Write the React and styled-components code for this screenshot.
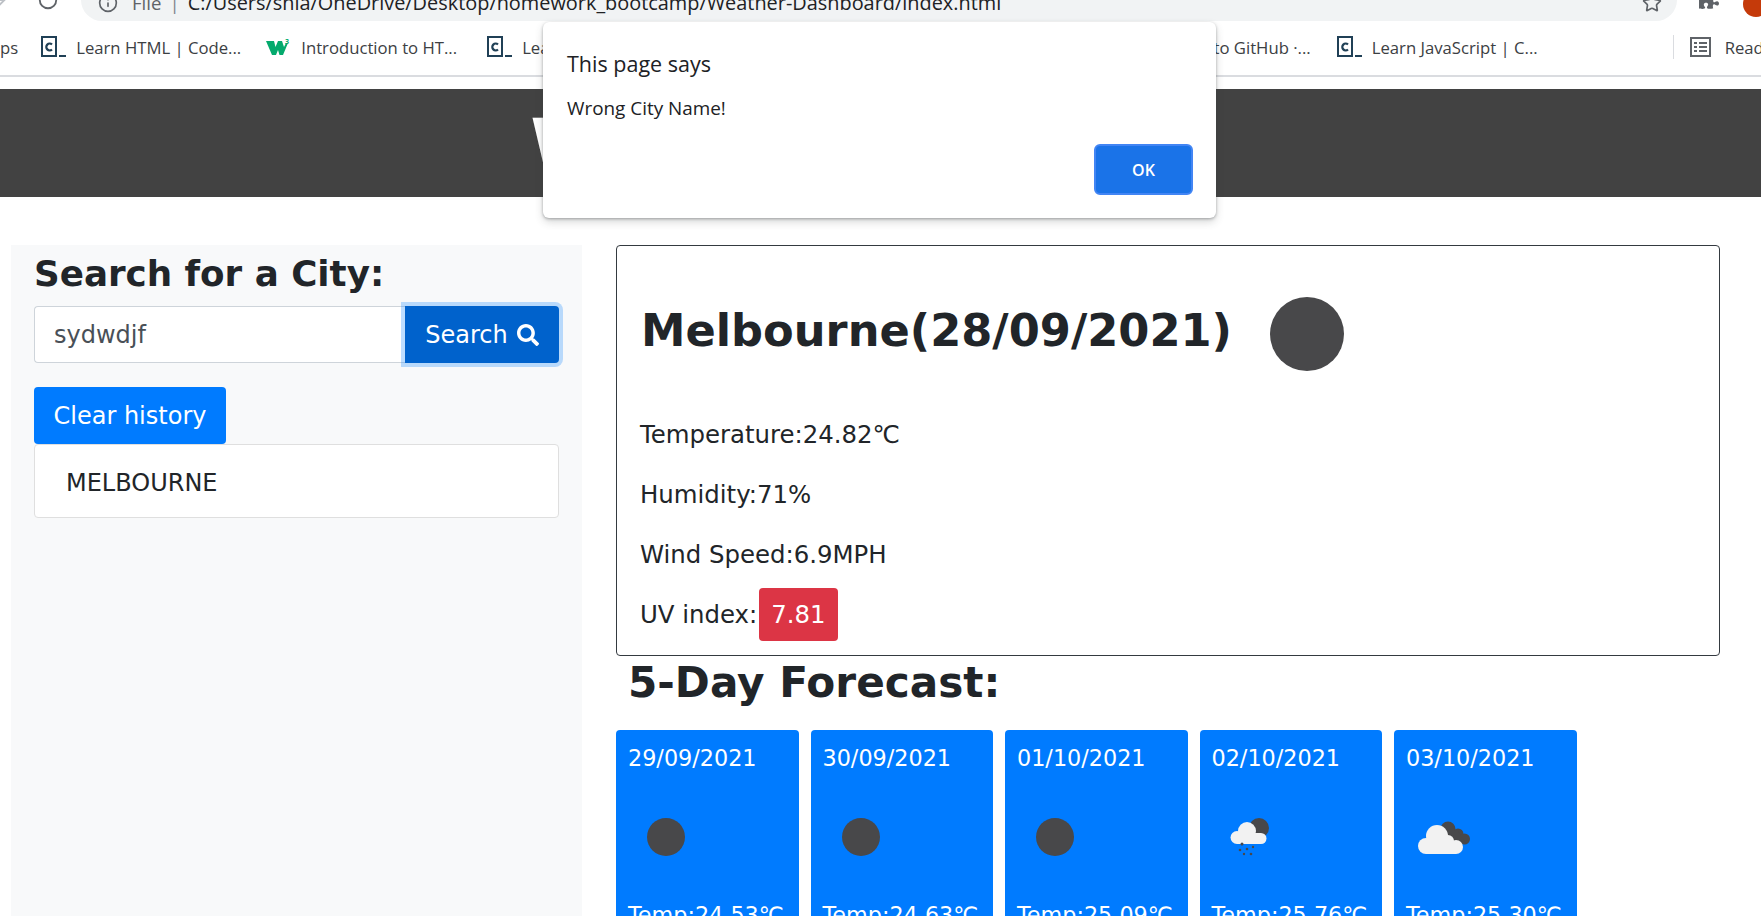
import React from 'react';
import styled, { createGlobalStyle } from 'styled-components';
import { FaSearch, FaPuzzlePiece } from 'react-icons/fa';
import { ArrowRight, RotateCw, Info, Star } from 'lucide-react';

const GlobalStyle = createGlobalStyle`
  html, body {
    margin: 0;
    height: 100%;
    overflow: hidden;
    background: #ffffff;
  }
  * {
    box-sizing: border-box;
  }
`;

const Page = styled.div`
  position: relative;
  width: 1761px;
  height: 916px;
  overflow: hidden;
  font-family: 'DejaVu Sans', sans-serif;
  color: #212529;
`;

const Toolbar = styled.div`
  display: flex;
  align-items: center;
  height: 42px;
  margin-top: -21px;
  color: #5f6368;

  & > * {
    flex-shrink: 0;
  }
`;

const ForwardArrow = styled(ArrowRight)`
  margin-left: -13px;
  margin-right: 28px;
  color: #bdc1c6;
`;

const AddressBar = styled.div`
  display: flex;
  align-items: center;
  gap: 8px;
  width: 1596px;
  height: 42px;
  margin-left: 22px;
  padding: 5px 15px 0 17px;
  border-radius: 21px;
  background: #f1f3f4;
  font-family: 'Open Sans', sans-serif;
  font-size: 18.6px;
`;

const InfoIcon = styled(Info)`
  flex-shrink: 0;
  margin-right: 6px;
`;

const Url = styled.span`
  flex: 1;
  color: #202124;
  font-size: 19.9px;
  white-space: nowrap;
`;

const Divider = styled.span`
  color: #80868b;
`;

const ToolbarRight = styled.div`
  display: flex;
  align-items: center;
  gap: 24px;
  margin-left: 22px;
`;

const Avatar = styled.div`
  flex-shrink: 0;
  width: 26px;
  height: 26px;
  border-radius: 50%;
  background: #c53a0a;
  margin-top: 8px;
`;

const BookmarkBar = styled.div`
  display: flex;
  align-items: center;
  height: 56px;
  padding-bottom: 2px;
  border-bottom: 2px solid #dadce0;
  font-family: 'Open Sans', sans-serif;
  font-size: 16.7px;
  color: #3c4043;
  white-space: nowrap;
  overflow: hidden;
`;

const Bookmark = styled.div`
  display: flex;
  flex-shrink: 0;
  align-items: center;
  gap: ${(p) => p.$gap || 10}px;
  margin-left: ${(p) => p.$left || 0}px;
  margin-right: ${(p) => p.$right || 0}px;
`;

const BarSpacer = styled.div`
  flex: 1;
`;

const BarRule = styled.div`
  flex-shrink: 0;
  width: 1px;
  height: 24px;
  margin: 0 16px 0 135px;
  background: #dadce0;
`;

const CodeIconBox = styled.span`
  display: inline-block;
  width: 25px;
  height: 22px;
  flex-shrink: 0;
`;

const CodeIcon = () => (
  <CodeIconBox>
    <svg width="25" height="22" viewBox="0 0 25 22">
      <rect x="1" y="1" width="14" height="19" fill="none" stroke="#204056" strokeWidth="2" />
      <path d="M11 8.5 A3.4 3.4 0 1 0 11 13.5" fill="none" stroke="#204056" strokeWidth="2.2" />
      <rect x="18" y="19" width="7" height="2" fill="#204056" />
    </svg>
  </CodeIconBox>
);

const W3Icon = () => (
  <svg width="25" height="18" viewBox="0 0 25 18">
    <path d="M0 3h8l1.5 6L12 3h4l2 6 2-4h2l-5 12h-3.500l-1.500-5-2 5H6z" fill="#04aa6d" />
    <text x="19" y="6" fontSize="7" fontWeight="700" fontFamily="Open Sans" fill="#04aa6d">3</text>
  </svg>
);

const ReadingIcon = () => (
  <svg width="21" height="20" viewBox="0 0 21 20" fill="none" stroke="#5f6368" strokeWidth="2">
    <rect x="1" y="1" width="19" height="18" />
    <path d="M4 6h3M9 6h8M4 10h3M9 10h8M4 14h3M9 14h8" strokeWidth="1.8" />
  </svg>
);

const Banner = styled.header`
  height: 108px;
  margin-top: 12px;
  padding: 12px 26px 0 0;
  background: #424242;
  color: #ffffff;
  font-size: 60px;
  font-weight: 700;
  line-height: 80px;
  text-align: center;
  white-space: nowrap;
`;

const Content = styled.main`
  display: flex;
  align-items: flex-start;
  gap: 34px;
  padding: 48px 0 0 11px;
`;

const Sidebar = styled.aside`
  flex: 0 0 571px;
  height: 671px;
  padding: 0 23px;
  background: #f8f9fa;
`;

const SideTitle = styled.h2`
  margin: 0;
  height: 61px;
  font-size: 35.7px;
  font-weight: 700;
  line-height: 58px;
  white-space: nowrap;
`;

const SearchRow = styled.div`
  display: flex;
  height: 57px;
`;

const CityInput = styled.input`
  flex: 1;
  min-width: 0;
  height: 57px;
  padding: 0 19px;
  border: 1px solid #ced4da;
  border-right: 0;
  border-radius: 4px 0 0 4px;
  background: #ffffff;
  color: #495057;
  font-family: inherit;
  font-size: 24px;
  outline: none;
`;

const SearchButton = styled.button`
  display: flex;
  align-items: center;
  justify-content: center;
  gap: 9px;
  width: 154px;
  height: 57px;
  border: 0;
  border-radius: 0 4px 4px 0;
  background: #0062cc;
  box-shadow: 0 0 0 4px rgba(38, 143, 255, 0.3);
  color: #ffffff;
  font-family: inherit;
  font-size: 24px;
`;

const ClearButton = styled.button`
  display: block;
  width: 192px;
  height: 57px;
  margin-top: 24px;
  padding: 0;
  border: 0;
  border-radius: 4px;
  background: #007bff;
  color: #ffffff;
  font-family: inherit;
  font-size: 24px;
`;

const HistoryItem = styled.div`
  height: 74px;
  padding-left: 31px;
  border: 1px solid #dfdfdf;
  border-radius: 4px;
  background: #ffffff;
  font-size: 24px;
  line-height: 76px;
`;

const Results = styled.section`
  width: 1104px;
`;

const CurrentCard = styled.div`
  height: 411px;
  padding: 0 24px;
  border: 1px solid #343a40;
  border-radius: 4px;
`;

const CityRow = styled.div`
  display: flex;
  align-items: center;
  gap: 38px;
  height: 158px;
  padding-top: 17px;
`;

const CityName = styled.h2`
  margin: 0 0 6px;
  font-size: 44.7px;
  font-weight: 700;
  white-space: nowrap;
`;

const BigDot = styled.div`
  width: 74px;
  height: 74px;
  border-radius: 50%;
  background: #48484a;
`;

const Stat = styled.p`
  display: flex;
  align-items: center;
  height: 60px;
  margin: 0 0 0 -1px;
  font-size: 24.4px;
`;

const Badge = styled.span`
  display: inline-block;
  height: 53px;
  margin-left: 2px;
  padding: 0 12px;
  border-radius: 4px;
  background: #dc3545;
  color: #ffffff;
  line-height: 53px;
`;

const ForecastTitle = styled.h2`
  margin: 0;
  height: 74px;
  padding-left: 12px;
  font-size: 42.2px;
  font-weight: 700;
  line-height: 54px;
  white-space: nowrap;
`;

const ForecastRow = styled.div`
  display: flex;
  gap: 12px;
`;

const DayCard = styled.article`
  flex: 0 0 182.5px;
  height: 220px;
  padding: 11px 12px;
  border-radius: 4px;
  background: #007bff;
  color: #ffffff;
  font-size: 22.3px;
  white-space: nowrap;
`;

const DayDate = styled.div`
  height: 34px;
  line-height: 34px;
`;

const DayIcon = styled.div`
  display: flex;
  align-items: center;
  height: 38px;
  margin: 43px 0 46px ${(p) => p.$left}px;
`;

const SmallDot = styled.div`
  width: 38px;
  height: 38px;
  border-radius: 50%;
  background: #48484a;
`;

const RainCloud = () => (
  <svg width="40" height="38" viewBox="0 0 40 38">
    <circle cx="30" cy="10" r="10" fill="#48484a" />
    <g fill="#f2f2f2">
      <circle cx="8" cy="19.500" r="6.500" />
      <circle cx="18" cy="13" r="9" />
      <circle cx="32" cy="20.500" r="5.500" />
      <rect x="8" y="15" width="24" height="11" />
    </g>
    <g fill="#48484a">
      <circle cx="13" cy="26" r="1.500" />
      <circle cx="11" cy="32" r="1.300" />
      <circle cx="18" cy="31" r="1.300" />
      <circle cx="24" cy="29" r="1.200" />
      <circle cx="15" cy="36" r="1.200" />
      <circle cx="22" cy="36" r="1.300" />
    </g>
  </svg>
);

const SunCloud = () => (
  <svg width="52" height="33" viewBox="0 0 52 33">
    <g fill="#48484a">
      <circle cx="30" cy="8" r="7.500" />
      <circle cx="40" cy="13" r="5.500" />
      <circle cx="46.500" cy="18" r="5.500" />
      <path d="M28 10h12l8 13H36z" />
    </g>
    <g fill="#f2f2f2">
      <circle cx="8" cy="25" r="8" />
      <circle cx="19" cy="15" r="11" />
      <circle cx="38" cy="26" r="7" />
      <circle cx="30" cy="20" r="6" />
      <rect x="8" y="20" width="30" height="13" />
    </g>
  </svg>
);

const Dialog = styled.div`
  position: absolute;
  top: 22px;
  left: 543px;
  width: 673px;
  height: 196px;
  padding: 27px 23px 0 24px;
  border-radius: 6px;
  background: #ffffff;
  box-shadow: 0 1px 3px rgba(60, 64, 67, 0.4), 0 4px 8px rgba(60, 64, 67, 0.2);
  font-family: 'Open Sans', sans-serif;
  color: #202124;
`;

const DialogTitle = styled.div`
  height: 29px;
  font-size: 21.5px;
  line-height: 29px;
`;

const DialogText = styled.div`
  margin-top: 18px;
  font-size: 18.9px;
  line-height: 25px;
`;

const DialogActions = styled.div`
  display: flex;
  justify-content: flex-end;
  margin-top: 23px;
`;

const OkButton = styled.button`
  width: 99px;
  height: 51px;
  border: 2px solid #4285f4;
  border-radius: 6px;
  background: #1a73e8;
  color: #ffffff;
  font-family: inherit;
  font-size: 16px;
  font-weight: 600;
`;

const days = [
  { date: '29/09/2021', temp: '24.53', icon: 'dot' },
  { date: '30/09/2021', temp: '24.63', icon: 'dot' },
  { date: '01/10/2021', temp: '25.09', icon: 'dot' },
  { date: '02/10/2021', temp: '25.76', icon: 'rain' },
  { date: '03/10/2021', temp: '25.30', icon: 'cloud' },
];

const renderIcon = (icon) => {
  if (icon === 'rain') return <DayIcon $left={17}><RainCloud /></DayIcon>;
  if (icon === 'cloud') return <DayIcon $left={12}><SunCloud /></DayIcon>;
  return <DayIcon $left={19}><SmallDot /></DayIcon>;
};

const App = () => (
  <Page>
    <GlobalStyle />
    <Toolbar>
      <ForwardArrow size={22} />
      <RotateCw size={22} />
      <AddressBar>
        <InfoIcon size={20} />
        <span>File</span>
        <Divider>|</Divider>
        <Url>C:/Users/shla/OneDrive/Desktop/homework_bootcamp/Weather-Dashboard/index.html</Url>
        <Star size={20} />
      </AddressBar>
      <ToolbarRight>
        <FaPuzzlePiece size={20} />
        <Avatar />
      </ToolbarRight>
    </Toolbar>

    <BookmarkBar>
      <span>ps</span>
      <Bookmark $left={23}>
        <CodeIcon />
        Learn HTML | Code...
      </Bookmark>
      <Bookmark $left={25}>
        <W3Icon />
        Introduction to HT...
      </Bookmark>
      <Bookmark $left={30}>
        <CodeIcon />
        Learn CSS | Codecademy
      </Bookmark>
      <BarSpacer />
      <Bookmark>Introduction to GitHub ·...</Bookmark>
      <Bookmark $left={26}>
        <CodeIcon />
        Learn JavaScript | C...
      </Bookmark>
      <BarRule />
      <Bookmark $gap={14} $right={-53}>
        <ReadingIcon />
        Reading list
      </Bookmark>
    </BookmarkBar>

    <Banner>Weather Dashboard</Banner>

    <Content>
      <Sidebar>
        <SideTitle>Search for a City:</SideTitle>
        <SearchRow>
          <CityInput defaultValue="sydwdjf" />
          <SearchButton>
            Search <FaSearch size={22} />
          </SearchButton>
        </SearchRow>
        <ClearButton>Clear history</ClearButton>
        <HistoryItem>MELBOURNE</HistoryItem>
      </Sidebar>

      <Results>
        <CurrentCard>
          <CityRow>
            <CityName>Melbourne(28/09/2021)</CityName>
            <BigDot />
          </CityRow>
          <Stat>Temperature:24.82℃</Stat>
          <Stat>Humidity:71%</Stat>
          <Stat>Wind Speed:6.9MPH</Stat>
          <Stat>
            UV index:<Badge>7.81</Badge>
          </Stat>
        </CurrentCard>
        <ForecastTitle>5-Day Forecast:</ForecastTitle>
        <ForecastRow>
          {days.map((day) => (
            <DayCard key={day.date}>
              <DayDate>{day.date}</DayDate>
              {renderIcon(day.icon)}
              <div>Temp:{day.temp}℃</div>
            </DayCard>
          ))}
        </ForecastRow>
      </Results>
    </Content>

    <Dialog>
      <DialogTitle>This page says</DialogTitle>
      <DialogText>Wrong City Name!</DialogText>
      <DialogActions>
        <OkButton>OK</OkButton>
      </DialogActions>
    </Dialog>
  </Page>
);

export default App;
